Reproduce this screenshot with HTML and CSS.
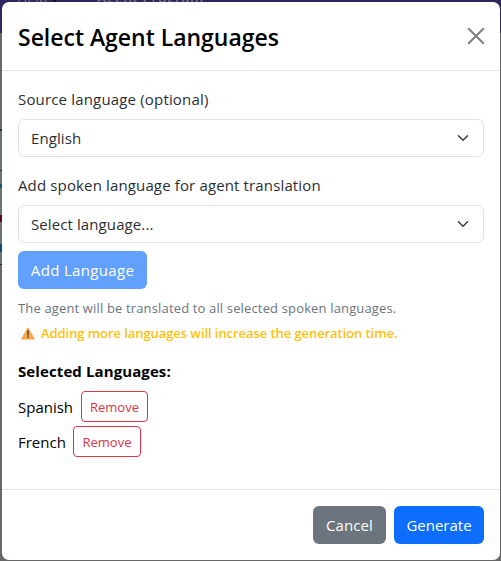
FILE: index.html
```html
<!DOCTYPE html>
<html lang="en">
<head>
<meta charset="utf-8">
<title>Select Agent Languages</title>
<link rel="stylesheet" href="styles.css">
</head>
<body>
<div class="page-behind" aria-hidden="true">
  <div class="navbar"><span class="nav-help">Help <b>▾</b></span><span class="nav-title">Agent Program</span></div>
  <div class="canvas"><div class="canvas-block"></div></div>
</div>
<div class="modal" role="dialog" aria-labelledby="title">
  <header class="modal-header">
    <h1 class="modal-title" id="title">Select Agent Languages</h1>
    <button class="close" aria-label="Close"><svg viewBox="0 0 16 16" width="16" height="16"><path d="M.7.7 15.3 15.3M15.3.7.7 15.3" fill="none" stroke="currentColor" stroke-width="2" stroke-linecap="round"/></svg></button>
  </header>
  <main class="modal-body">
    <div class="label label-source">Source language (optional)</div>
    <div class="select select-source"><span class="value-english">English</span><svg class="chevron" viewBox="0 0 16 16" width="12" height="12"><path d="m2 5 6 6 6-6" fill="none" stroke="currentColor" stroke-width="2" stroke-linecap="round" stroke-linejoin="round"/></svg></div>
    <div class="label label-spoken">Add spoken language for agent translation</div>
    <div class="select"><span class="value-placeholder">Select language...</span><svg class="chevron" viewBox="0 0 16 16" width="12" height="12"><path d="m2 5 6 6 6-6" fill="none" stroke="currentColor" stroke-width="2" stroke-linecap="round" stroke-linejoin="round"/></svg></div>
    <button class="btn btn-add" disabled>Add Language</button>
    <div class="help"><span>The agent will be translated to all selected spoken languages.</span></div>
    <div class="warning"><svg class="warning-icon" viewBox="0 0 14 13" width="14" height="13"><path d="M7 .8 13.4 12H.6Z" fill="#f9a64a" stroke="#f9a64a" stroke-width="1" stroke-linejoin="round"/><path d="M6.1 3.6h1.8L7.6 8.8H6.4ZM6.2 9.6h1.6v1.5H6.2Z" fill="#4a4540"/></svg><span>Adding more languages will increase the generation time.</span></div>
    <div class="selected-title">Selected Languages:</div>
    <div class="language"><span class="name-spanish">Spanish</span><button class="btn-remove">Remove</button></div>
    <div class="language language-french"><span class="name-french">French</span><button class="btn-remove">Remove</button></div>
  </main>
  <footer class="modal-footer">
    <button class="btn btn-cancel">Cancel</button>
    <button class="btn btn-generate">Generate</button>
  </footer>
</div>
</body>
</html>
```

FILE: styles.css
```css
* { box-sizing: border-box; }
body {
  margin: 0;
  width: 501px;
  height: 561px;
  overflow: hidden;
  padding: 2px 1px 1px 2px;
  background: #686868;
  color: #2b2f33;
  font: 15px/24px "Open Sans", "Noto Sans", sans-serif;
}
button { font-family: inherit; margin: 0; white-space: nowrap; }
.page-behind { position: absolute; inset: 0; z-index: -1; overflow: hidden; }
.navbar { height: 33px; background: #30265f; color: #77728f; font-size: 14px; line-height: 16px; position: relative; }
.nav-help, .nav-title { position: absolute; top: -10px; left: 17px; }
.nav-title { left: 97px; font-weight: 600; letter-spacing: .4px; }
.nav-help b { color: #111; }
.canvas { height: 528px; padding-top: 96px; background: #686868; }
.canvas-block { width: 3px; height: 136px; background: linear-gradient(#68756d 0 39px, #333 39px 40px, #68756d 40px 53px, #175878 53px 57px, #68756d 57px 84px, #550b16 84px 91px, #68756d 91px 113px, #174a70 113px 121px, #68756d 121px); border-top: 2px solid #333; border-bottom: 1px solid #222; }
.modal { width: 498px; height: 558px; background: #fff; border-radius: 7px; display: flex; flex-direction: column; }
.modal-header { height: 69px; border-bottom: 1px solid #e5e5e6; display: flex; align-items: center; justify-content: space-between; padding: 0 16px; }
.modal-title { margin: 0; padding-top: 2px; color: #000; font-size: 23px; line-height: 36px; font-weight: 600; letter-spacing: -0.02px; white-space: nowrap; }
.close { color: #7f7f7f; background: none; border: 0; padding: 0; width: 16px; height: 16px; display: flex; }
.close svg { overflow: visible; }
.modal-body { flex: 1; padding: 16px; display: flex; flex-direction: column; align-items: flex-start; }
.label { height: 24px; margin-bottom: 8px; white-space: nowrap; }
.label-source { letter-spacing: .17px; }
.label-spoken { letter-spacing: .14px; }
.value-placeholder { letter-spacing: .1px; }
.value-english { letter-spacing: .08px; }
.select { width: 466px; height: 38px; border: 1px solid #dee2e6; border-radius: 6px; padding: 0 14px 0 12px; display: flex; align-items: center; justify-content: space-between; }
.select-source { margin-bottom: 16px; }
.chevron { color: #343a40; }
.btn { height: 38px; border: 0; border-radius: 6px; color: #fff; font-size: 15px; line-height: 24px; padding: 0; text-align: center; }
.btn-add { width: 129px; margin-top: 8px; background: #62a0fe; letter-spacing: .33px; }
.help { height: 21px; margin-top: 9px; font-size: 13px; line-height: 21px; letter-spacing: .15px; color: #6c757d; white-space: nowrap; }
.warning { height: 21px; margin-top: 4px; padding-left: 3px; display: flex; align-items: center; gap: 6px; font-size: 13px; line-height: 21px; font-weight: 600; letter-spacing: -.07px; color: #ffc107; white-space: nowrap; }
.selected-title { color: #000; font-weight: 700; height: 24px; margin: 15px 0 8px; letter-spacing: .1px; white-space: nowrap; }
.language { height: 31px; display: flex; align-items: center; gap: 8px; color: #000; }
.language-french { margin-top: 4px; }
.name-spanish { width: 55px; }
.name-french { width: 47px; }
.btn-remove { width: 67px; height: 31px; border: 1px solid #dc3545; border-radius: 4px; background: #fff; color: #dc3545; font-size: 13px; line-height: 21px; padding: 1px 0 0; }
.language-french .btn-remove { width: 68px; }
.modal-footer { height: 71px; border-top: 1px solid #e5e5e6; display: flex; align-items: center; justify-content: flex-end; gap: 8px; padding: 0 16px; }
.btn-cancel { width: 73px; background: #6c757d; letter-spacing: .1px; }
.btn-generate { width: 90px; background: #0d6efd; }
```
